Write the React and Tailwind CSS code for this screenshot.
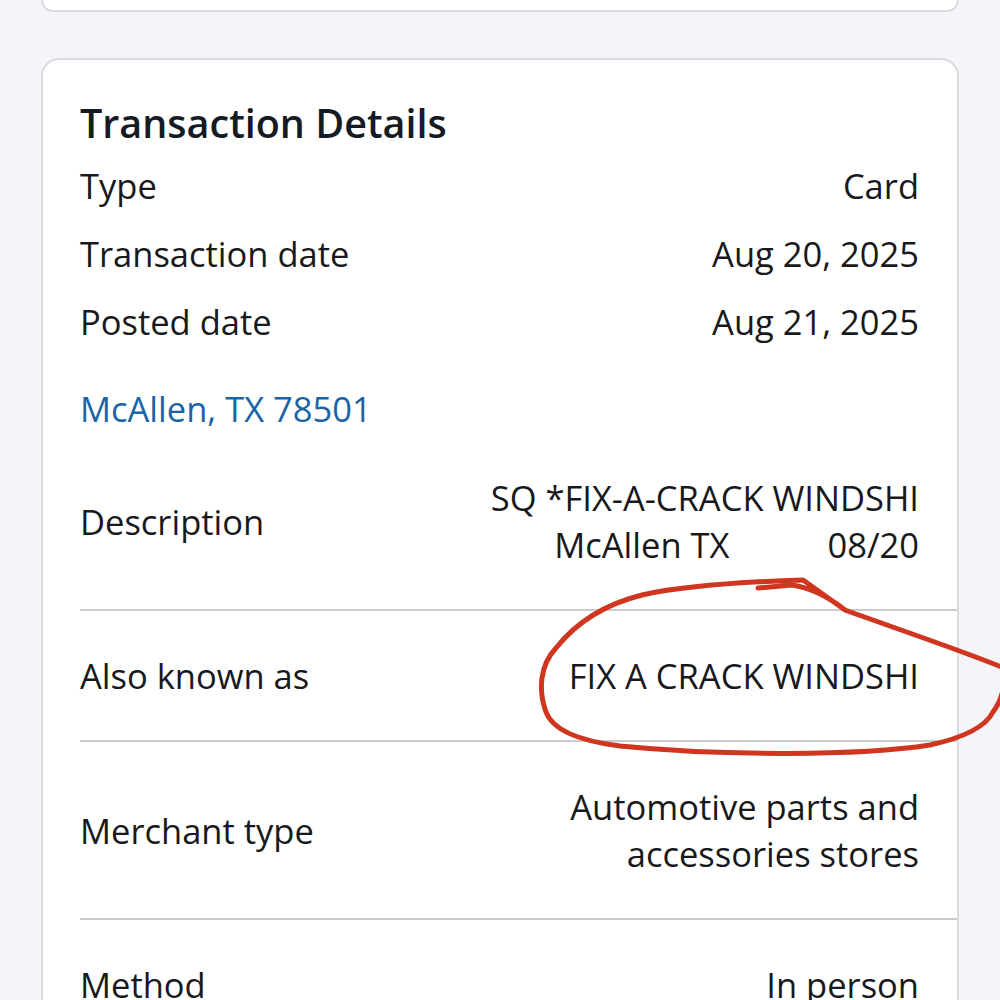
const rows = [
  { label: "Type", value: "Card" },
  { label: "Transaction date", value: "Aug 20, 2025" },
  { label: "Posted date", value: "Aug 21, 2025" },
];

function DividedRow({ label, children, first, last }) {
  let cls = "flex items-center justify-between pr-[38px] pb-[41px]";
  cls += first ? " pt-[42px]" : " pt-[41px]";
  if (!last) cls += " border-b-2 border-[#c9cbcf]";
  return (
    <div className={cls}>
      <span>{label}</span>
      <div className="text-right">{children}</div>
    </div>
  );
}

export default function App() {
  return (
    <div
      className="relative w-[1000px] h-[1000px] overflow-hidden bg-[#f4f5f8] text-[#18191c]"
      style={{ fontFamily: '"Open Sans", "Noto Sans", sans-serif' }}
    >
      {/* bottom of the card above */}
      <div className="mx-[41px] h-[12px] bg-white border-x-2 border-b-2 border-[#d8dbe0] rounded-b-[18px]" />

      <div className="mx-[41px] mt-[46px] bg-white border-2 border-[#d8dbe0] rounded-[18px] pl-[37px] pt-[39px] text-[34.5px] leading-[47px]">
        <h2 className="text-[39.5px] leading-[48px] font-semibold text-[#151b23]">
          Transaction Details
        </h2>

        <div className="mt-[15px] flex flex-col gap-[21px] pr-[38px]">
          {rows.map((r) => (
            <div key={r.label} className="flex justify-between">
              <span>{r.label}</span>
              <span>{r.value}</span>
            </div>
          ))}
        </div>

        <div className="mt-[40px] text-[#1a64a6]">McAllen, TX 78501</div>

        <div>
          <DividedRow label="Description" first>
            <div>SQ *FIX-A-CRACK WINDSHI</div>
            <div className="flex justify-end gap-[98px]">
              <span>McAllen TX</span>
              <span>08/20</span>
            </div>
          </DividedRow>
          <DividedRow label="Also known as">
            <div>FIX A CRACK WINDSHI</div>
          </DividedRow>
          <DividedRow label="Merchant type">
            <div>Automotive parts and</div>
            <div>accessories stores</div>
          </DividedRow>
          <DividedRow label="Method" last>
            <div>In person</div>
          </DividedRow>
        </div>
      </div>

      {/* hand-drawn red circle */}
      <svg
        className="absolute top-0 left-0 pointer-events-none"
        width="1000"
        height="1000"
        viewBox="0 0 1000 1000"
        fill="none"
      >
        <path
          d="M758 588 L792 585 C812 588 830 598 845 610 C900 630 960 650 1004 668 C1006 690 999 704 993 712 C985 728 962 738 930 745 C860 756 720 756 620 746 C580 741 553 731 546 712 C538 690 540 665 556 648 C575 624 602 605 642 595 C682 586 742 582 803 580 L845 610"
          stroke="#d0351f"
          strokeWidth="5"
          strokeLinecap="round"
          strokeLinejoin="round"
        />
      </svg>
    </div>
  );
}
